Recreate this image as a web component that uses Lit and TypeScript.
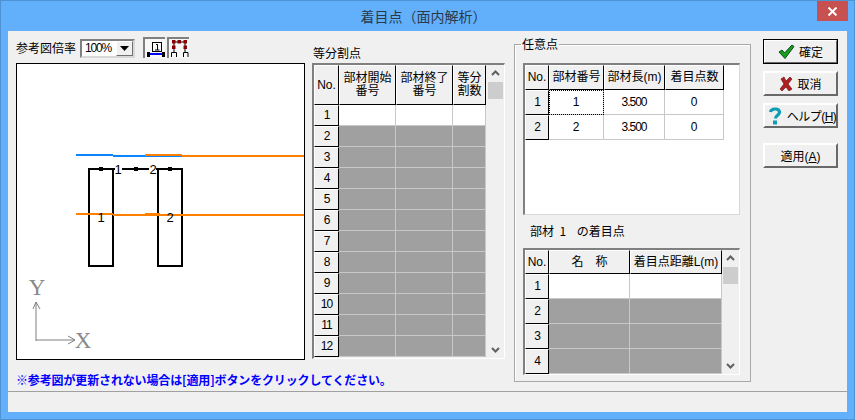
import { LitElement, html, css, svg } from "lit";
import { customElement } from "lit/decorators.js";

const chevUp = svg`<svg width="9" height="6" viewBox="0 0 9 6"><path d="M1 5l3.5-3.5L8 5" fill="none" stroke="#606060" stroke-width="2"/></svg>`;
const chevDown = svg`<svg width="9" height="6" viewBox="0 0 9 6"><path d="M1 1l3.5 3.5L8 1" fill="none" stroke="#606060" stroke-width="2"/></svg>`;

type Cell = { t?: string; cls?: string };

@customElement("app-root")
export class AppRoot extends LitElement {
  static styles = css`
    :host {
      display: block;
      width: 855px;
      height: 420px;
      font-family: "Liberation Sans", "Noto Sans CJK JP", sans-serif;
      font-size: 12px;
      color: #000;
      text-spacing-trim: space-all;
    }
    * { box-sizing: border-box; }
    .frame {
      width: 855px;
      height: 420px;
      background: #62b0fb;
      border: 1px solid #4f93d3;
      padding: 0 7px 7px 7px;
      display: flex;
      flex-direction: column;
    }
    .titlebar {
      height: 30px;
      display: flex;
      justify-content: space-between;
      margin-right: -7px;
      padding-right: 6px;
    }
    .title {
      flex: 1;
      text-align: center;
      font-size: 14px;
      line-height: 30px;
      color: #2a3a4a;
      padding-left: 22px;
      font-family: "Noto Sans CJK JP", sans-serif;
    }
    .close {
      width: 31px;
      height: 20px;
      background: #c75050;
      display: flex;
      align-items: center;
      justify-content: center;
    }
    .client {
      flex: 1;
      background: #f0f0f0;
      display: flex;
      flex-direction: column;
      min-height: 0;
    }
    .main {
      flex: 1;
      display: grid;
      grid-template-columns: 289px 200px 246px 87px;
      padding: 6px 0 0 8px;
      align-items: start;
    }
    .status {
      height: 21px;
      border-top: 1px solid #a0a0a0;
    }
    .left { display: flex; flex-direction: column; }
    .toolbar { display: flex; align-items: flex-start; height: 21px; }
    .lab { width: 64px; line-height: 16px; padding-top: 3px; font-family: "Noto Sans CJK JP", sans-serif; }
    .combo {
      width: 55px;
      height: 19px;
      margin-top: 2px;
      border: 2px solid;
      border-color: #808080 #d8d8d8 #d8d8d8 #808080;
      background: #fff;
      display: flex;
      justify-content: space-between;
    }
    .combo span { padding-left: 3px; line-height: 15px; letter-spacing: -1.2px; }
    .combo i {
      width: 17px;
      background: #f0f0f0;
      border: 1px solid;
      border-color: #fff #707070 #707070 #fff;
      display: flex;
      align-items: center;
      justify-content: center;
    }
    .tb {
      width: 22px;
      height: 21px;
      margin-left: 2px;
      background: #f8f8f8;
      border-top: 2px solid #808080;
      border-left: 2px solid #808080;
    }
    .tb svg { display: block; margin: -2px 0 0 -2px; }
    .tb.first { margin-left: 8px; }
    .canvas {
      margin-top: 5px;
      width: 289px;
      height: 297px;
      background: #fff;
      border: 1px solid #000;
    }
    .canvas svg { display: block; }
    .note {
      margin-top: 12px;
      height: 16px;
      line-height: 16px;
      color: #0000ff;
      font-weight: 700;
      font-size: 12px;
      letter-spacing: -0.14px;
      font-family: "Noto Sans CJK JP", sans-serif;
      white-space: nowrap;
    }
    .mid { margin-left: 7px; padding-top: 9px; }
    .cap { height: 14px; line-height: 14px; margin-bottom: 3px; padding-left: 1px; font-family: "Noto Sans CJK JP", sans-serif; }
    .gridbox {
      border-top: 2px solid #808080;
      border-left: 2px solid #808080;
      display: flex;
      background: #f0f0f0;
      border-right: 1px solid #fff;
      border-bottom: 1px solid #fff;
    }
    .gridbox.white { background: #fff; border-color: #808080 #d8d8d8 #d8d8d8 #808080; }
    .cells { display: grid; align-content: start; }
    .c {
      display: flex;
      align-items: center;
      justify-content: center;
      text-align: center;
      line-height: 13px;
      white-space: pre-line;
      overflow: hidden;
    }
    .h {
      background: #f0f0f0;
      border-top: 1px solid #fff;
      border-left: 1px solid #fff;
      border-right: 1px solid #000;
      border-bottom: 1px solid #000;
    }
    .w { background: #fff; border-right: 1px solid #c8c8c8; border-bottom: 1px solid #c8c8c8; }
    .g { background: #a0a0a0; border-right: 1px solid #c8c8c8; border-bottom: 1px solid #c8c8c8; }
    .n { letter-spacing: -1px; }
    .cur { outline: 1px dotted #000; outline-offset: -1px; }
    .sb {
      margin-left: auto;
      width: 15px;
      margin-right: 1px;
      display: flex;
      flex-direction: column;
      align-items: center;
    }
    .sb .arr { height: 16px; display: flex; align-items: center; justify-content: center; flex: none; }
    .sb .thumb { height: 17px; width: 15px; background: #cdcdcd; flex: none; margin-top: 1px; }
    .sb .sp { flex: 1; }
    .group {
      margin: 0 0 0 9px;
      width: 237px;
      height: 345px;
      border: 1px solid #a8a8a8;
      padding: 12px 10px 0 8px;
      min-width: 0;
      box-shadow: inset 1px 1px 0 #fff;
    }
    .group legend {
      padding: 0 1px;
      margin-left: -2px;
      line-height: 14px;
      font-family: "Noto Sans CJK JP", sans-serif;
    }
    .sub { margin: 9px 0 10px 7px; height: 14px; line-height: 14px; white-space: pre; font-family: "Noto Sans CJK JP", sans-serif; }
    .btns { margin-left: 12px; padding-top: 2px; display: flex; flex-direction: column; }
    .btn {
      width: 75px;
      height: 25px;
      margin-bottom: 7px;
      background: #f0f0f0;
      border: 2px solid;
      border-color: #fff #696969 #696969 #fff;
      display: flex;
      align-items: center;
      justify-content: center;
      gap: 4px;
      white-space: nowrap;
    }
    .btn.def { outline: 1px solid #000; outline-offset: -1px; }
    .btn.apply { margin-top: 8px; }
    .btn.help { gap: 6px; padding-left: 4px; letter-spacing: -0.5px; }
    .btn svg { flex: none; }
    .btn u { text-underline-offset: 1px; }
    .d text { font-family: "Liberation Sans", sans-serif; font-size: 13px; text-anchor: middle; }
    .d .axis { font-family: "Liberation Serif", serif; font-size: 23px; fill: #8a8a8a; }
  `;

  private grid(cols: number[], rows: { h: number; cells: Cell[] }[]) {
    const flat = rows.flatMap((r) => r.cells);
    return html`<div
      class="cells"
      style="grid-template-columns:${cols.map((c) => c + "px").join(" ")};grid-template-rows:${rows
        .map((r) => r.h + "px")
        .join(" ")}"
    >
      ${flat.map((c) => html`<div class="c ${c.cls ?? ""}">${c.t ?? ""}</div>`)}
    </div>`;
  }

  private scrollbar() {
    return html`<div class="sb">
      <div class="arr">${chevUp}</div>
      <div class="thumb"></div>
      <div class="sp"></div>
      <div class="arr">${chevDown}</div>
    </div>`;
  }

  private diagram() {
    return svg`<svg class="d" width="287" height="295" viewBox="17 64 287 295">
      <g fill="none" stroke-width="2">
        <path d="M76 155H113" stroke="#0a84ff"/>
        <path d="M113 156H182" stroke="#0a84ff"/>
        <path d="M145 155H182" stroke="#ff8000"/>
        <path d="M182 156H304" stroke="#ff8000"/>
        <rect x="89" y="169" width="24" height="97" stroke="#000"/>
        <rect x="158" y="169" width="24" height="97" stroke="#000"/>
        <path d="M113 169H115M122 169H149M156 169H158" stroke="#000"/>
        <path d="M76 214H113M113 215H304M145 214H160" stroke="#ff8000"/>
      </g>
      <g fill="#000">
        <rect x="99" y="167" width="4" height="4"/>
        <rect x="134" y="167" width="4" height="4"/>
        <rect x="168" y="167" width="4" height="4"/>
        <text x="118" y="174">1</text>
        <text x="153" y="174">2</text>
        <text x="101" y="222">1</text>
        <text x="170" y="222">2</text>
      </g>
      <text class="axis" x="37" y="295">Y</text>
      <text class="axis" x="83" y="348">X</text>
      <path d="M36 341V302M33 309L36 302L40 309M36 340H75M68 336L75 340L68 344" fill="none" stroke="#808080" stroke-width="1"/>
    </svg>`;
  }

  render() {
    const hdr = (t: string): Cell => ({ t, cls: "h" });
    const rh = (t: string): Cell => ({ t, cls: "h n" });
    const t1Rows = [
      { h: 40, cells: [hdr("No."), hdr("部材開始\n番号"), hdr("部材終了\n番号"), hdr("等分\n割数")] },
      ...Array.from({ length: 12 }, (_, i) => ({
        h: 21,
        cells: [rh(String(i + 1)), ...[0, 1, 2].map(() => ({ cls: i === 0 ? "w" : "g" }))],
      })),
    ];
    const t2Rows = [
      { h: 25, cells: [hdr("No."), hdr("部材番号"), hdr("部材長(m)"), hdr("着目点数")] },
      { h: 25, cells: [rh("1"), { t: "1", cls: "w cur" }, { t: "3.500", cls: "w n" }, { t: "0", cls: "w" }] },
      { h: 25, cells: [rh("2"), { t: "2", cls: "w" }, { t: "3.500", cls: "w n" }, { t: "0", cls: "w" }] },
    ];
    const t3Rows = [
      { h: 24, cells: [hdr("No."), hdr("名　称"), hdr("着目点距離L(m)")] },
      ...[1, 2, 3, 4].map((n) => ({
        h: 25,
        cells: [rh(String(n)), { cls: n === 1 ? "w" : "g" }, { cls: n === 1 ? "w" : "g" }],
      })),
    ];
    return html`<div class="frame">
      <div class="titlebar">
        <div class="title">着目点（面内解析）</div>
        <div class="close">
          <svg width="11" height="9" viewBox="0 0 11 9"><path d="M1.5 .5l8 8M9.5 .5l-8 8" stroke="#fff" stroke-width="2"/></svg>
        </div>
      </div>
      <div class="client">
        <div class="main">
          <div class="left">
            <div class="toolbar">
              <div class="lab">参考図倍率</div>
              <div class="combo">
                <span>100%</span>
                <i><svg width="9" height="5" viewBox="0 0 9 5"><path d="M0 0h9L4.5 5z" fill="#000"/></svg></i>
              </div>
              <div class="tb first">
                <svg width="22" height="21" viewBox="0 0 22 21">
                  <rect x="9.5" y="5.500" width="9" height="9" fill="none" stroke="#000"/>
                  <path d="M13 7.500h1.500v5.500M12 13h4.500" fill="none" stroke="#000"/>
                  <path d="M7 17h12" stroke="#0000ff" stroke-width="2"/>
                  <path d="M5.500 15v5M20.500 15v5" stroke="#000" stroke-width="3"/>
                </svg>
              </div>
              <div class="tb">
                <svg width="22" height="21" viewBox="0 0 22 21">
                  <path d="M7 5H18M7 5V15M18 5V15M4.500 20V15.500H9.500V20M16.500 20V15.500H21V20" fill="none" stroke="#000"/>
                  <g fill="#8b0000">
                    <rect x="5" y="3" width="3.500" height="3.500"/>
                    <rect x="10.500" y="3" width="3.500" height="3.500"/>
                    <rect x="16.500" y="3" width="3.500" height="3.500"/>
                    <rect x="5" y="8.500" width="3.500" height="3.500"/>
                    <rect x="16.500" y="8.500" width="3.500" height="3.500"/>
                  </g>
                </svg>
              </div>
            </div>
            <div class="canvas">${this.diagram()}</div>
            <div class="note">※参考図が更新されない場合は[適用]ボタンをクリックしてください。</div>
          </div>

          <div class="mid">
            <div class="cap">等分割点</div>
            <div class="gridbox" style="width:193px;height:296px">
              ${this.grid([25, 57, 57, 33], t1Rows)}
              ${this.scrollbar()}
            </div>
          </div>

          <fieldset class="group">
            <legend>任意点</legend>
            <div class="gridbox white" style="width:217px;height:152px">
              ${this.grid([24, 55, 61, 59], t2Rows)}
            </div>
            <div class="sub">部材  1    の着目点</div>
            <div class="gridbox" style="width:217px;height:127px">
              ${this.grid([24, 81, 92], t3Rows)}
              ${this.scrollbar()}
            </div>
          </fieldset>

          <div class="btns">
            <div class="btn def">
              <svg width="17" height="15" viewBox="0 0 17 15"><path d="M1 8l3-2 2.500 3L14 1l2 1.500L7 14.500z" fill="#16a016" stroke="#0c4a2a" stroke-width="1"/></svg>
              <span>確定</span>
            </div>
            <div class="btn">
              <svg width="14" height="15" viewBox="0 0 14 15"><path d="M2 3l3 -2 2 4 4-4 2 2-4 5 4 5-3 2-3-4-4 4-2-2 4-5z" fill="#b02020" stroke="#6a1a1a" stroke-width=".7"/></svg>
              <span>取消</span>
            </div>
            <div class="btn help">
              <svg width="12" height="18" viewBox="0 0 12 18"><path d="M1.500 5C2 1.500 10 .5 10.500 5c.3 3-4 3.500-4 6.500" fill="none" stroke="#0f9db5" stroke-width="3.200"/><rect x="4" y="13.500" width="4" height="4" fill="#0f9db5"/></svg>
              <span>ヘルプ(<u>H</u>)</span>
            </div>
            <div class="btn apply"><span>適用(<u>A</u>)</span></div>
          </div>
        </div>
        <div class="status"></div>
      </div>
    </div>`;
  }
}
